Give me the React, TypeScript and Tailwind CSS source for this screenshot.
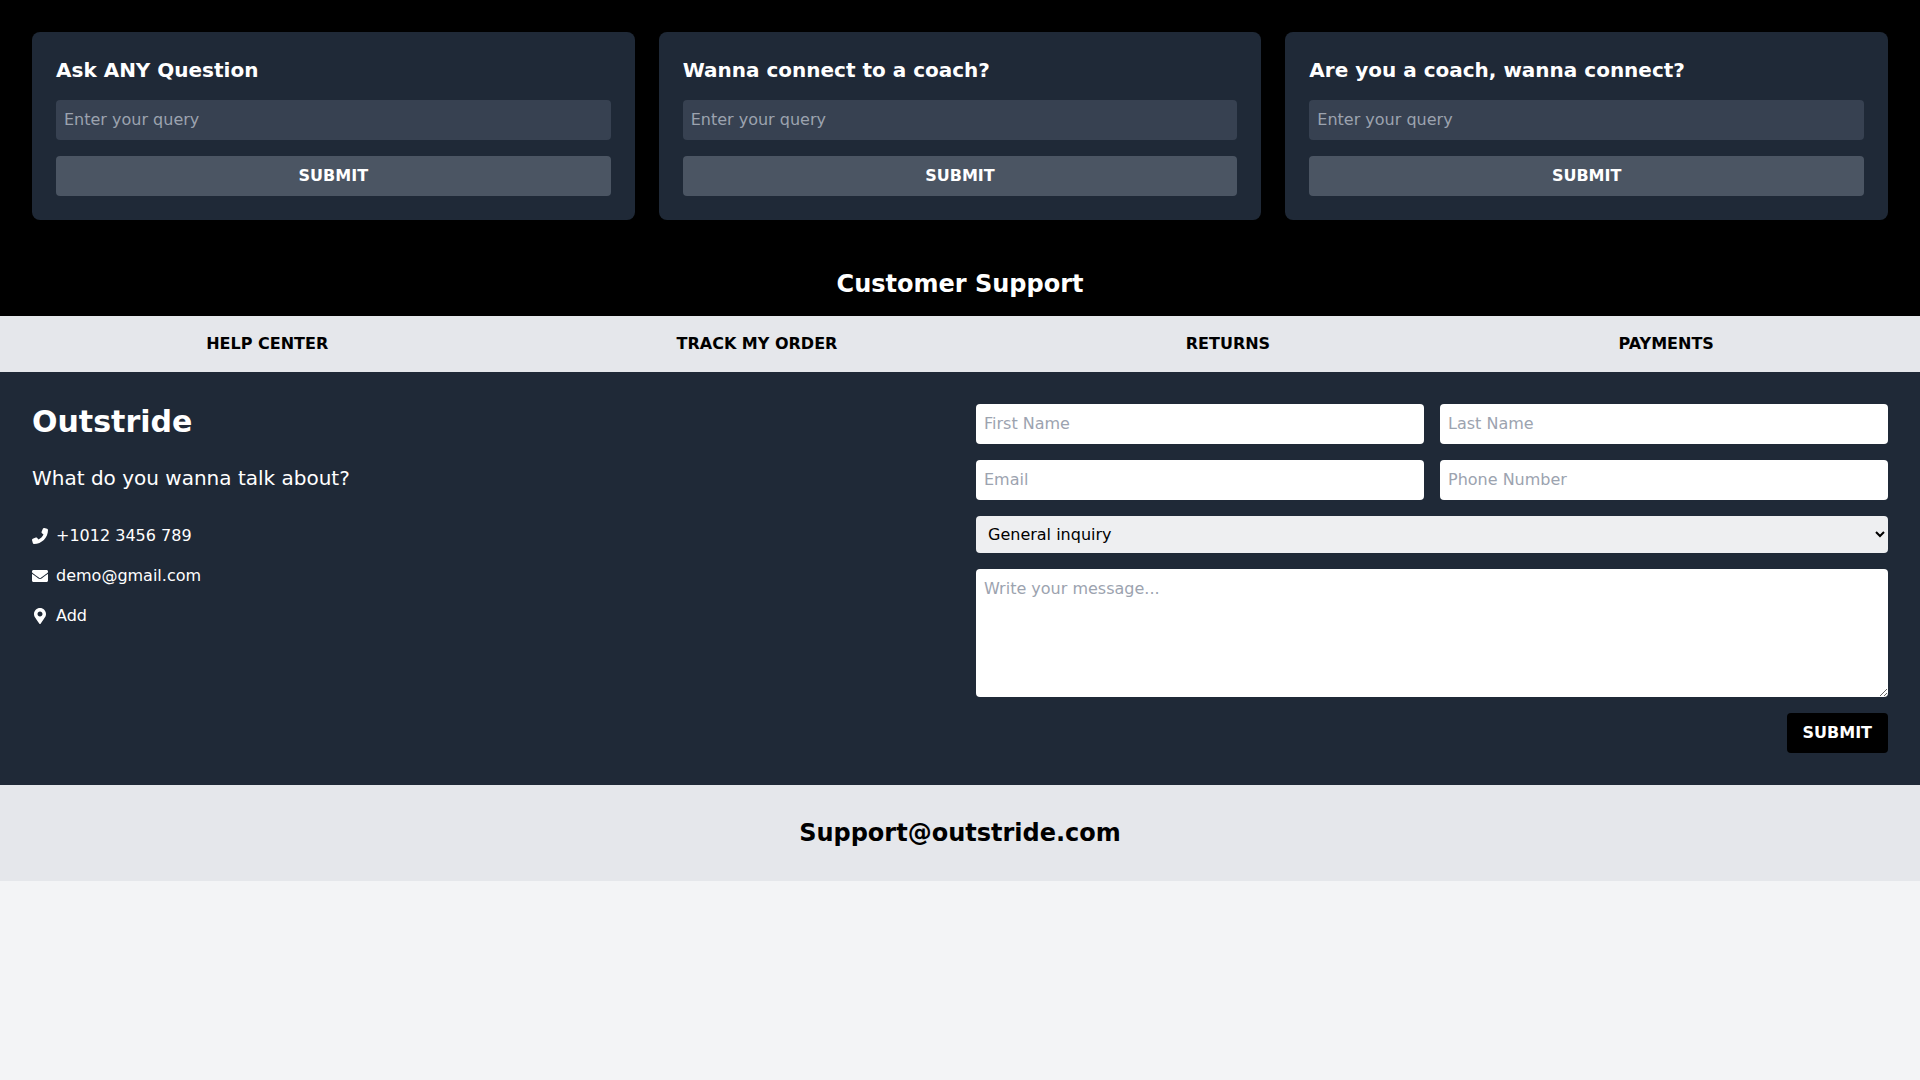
import { FaEnvelope, FaMapMarkerAlt } from "react-icons/fa";
import { FaPhoneFlip } from "react-icons/fa6";

const cards = ["Ask ANY Question", "Wanna connect to a coach?", "Are you a coach, wanna connect?"];
const links = ["HELP CENTER", "TRACK MY ORDER", "RETURNS", "PAYMENTS"];

const field = "w-full p-2 rounded bg-white text-black placeholder-[#9ca3af] outline-none";

const App = () => {
  return (
    <div className="min-h-screen bg-[#f3f4f6] font-['DejaVu_Sans',sans-serif] text-base">
      <section className="bg-black p-8 pb-4">
        <div className="grid grid-cols-3 gap-6">
          {cards.map((title) => (
            <div key={title} className="bg-[#1f2937] rounded-lg p-6">
              <h3 className="text-xl font-bold text-white mb-4">{title}</h3>
              <input
                placeholder="Enter your query"
                className="w-full p-2 rounded bg-[#374151] text-white placeholder-[#9ca3af] outline-none mb-4"
              />
              <button className="w-full py-2 rounded bg-[#4b5563] text-white font-bold">SUBMIT</button>
            </div>
          ))}
        </div>
        <h2 className="mt-12 text-2xl font-bold text-white text-center">Customer Support</h2>
      </section>

      <nav className="bg-[#e5e7eb] px-8 py-4 flex justify-around font-bold text-black">
        {links.map((link) => (
          <a key={link} href="#">
            {link}
          </a>
        ))}
      </nav>

      <section className="bg-[#1f2937] p-8 grid grid-cols-2 gap-8">
        <div className="text-white">
          <h2 className="text-3xl font-bold mb-6">Outstride</h2>
          <p className="text-xl mb-8">What do you wanna talk about?</p>
          <div className="flex flex-col gap-4">
            <div className="flex items-center gap-2">
              <FaPhoneFlip className="w-4 h-4" />
              <span>+1012 3456 789</span>
            </div>
            <div className="flex items-center gap-2">
              <FaEnvelope className="w-4 h-4" />
              <span>demo@gmail.com</span>
            </div>
            <div className="flex items-center gap-2">
              <FaMapMarkerAlt className="w-4 h-4" />
              <span>Add</span>
            </div>
          </div>
        </div>

        <form className="flex flex-col gap-4">
          <div className="grid grid-cols-2 gap-4">
            <input placeholder="First Name" className={field} />
            <input placeholder="Last Name" className={field} />
            <input placeholder="Email" className={field} />
            <input placeholder="Phone Number" className={field} />
          </div>
          <select className="w-full p-2 rounded bg-[#eeeff1] text-black outline-none">
            <option>General inquiry</option>
          </select>
          <textarea placeholder="Write your message..." className={`${field} h-32 block`} />
          <div className="flex justify-end">
            <button type="button" className="px-4 py-2 rounded bg-black text-white font-bold">
              SUBMIT
            </button>
          </div>
        </form>
      </section>

      <footer className="bg-[#e5e7eb] py-8 text-center text-2xl font-bold text-black">Support@outstride.com</footer>
    </div>
  );
};

export default App;
